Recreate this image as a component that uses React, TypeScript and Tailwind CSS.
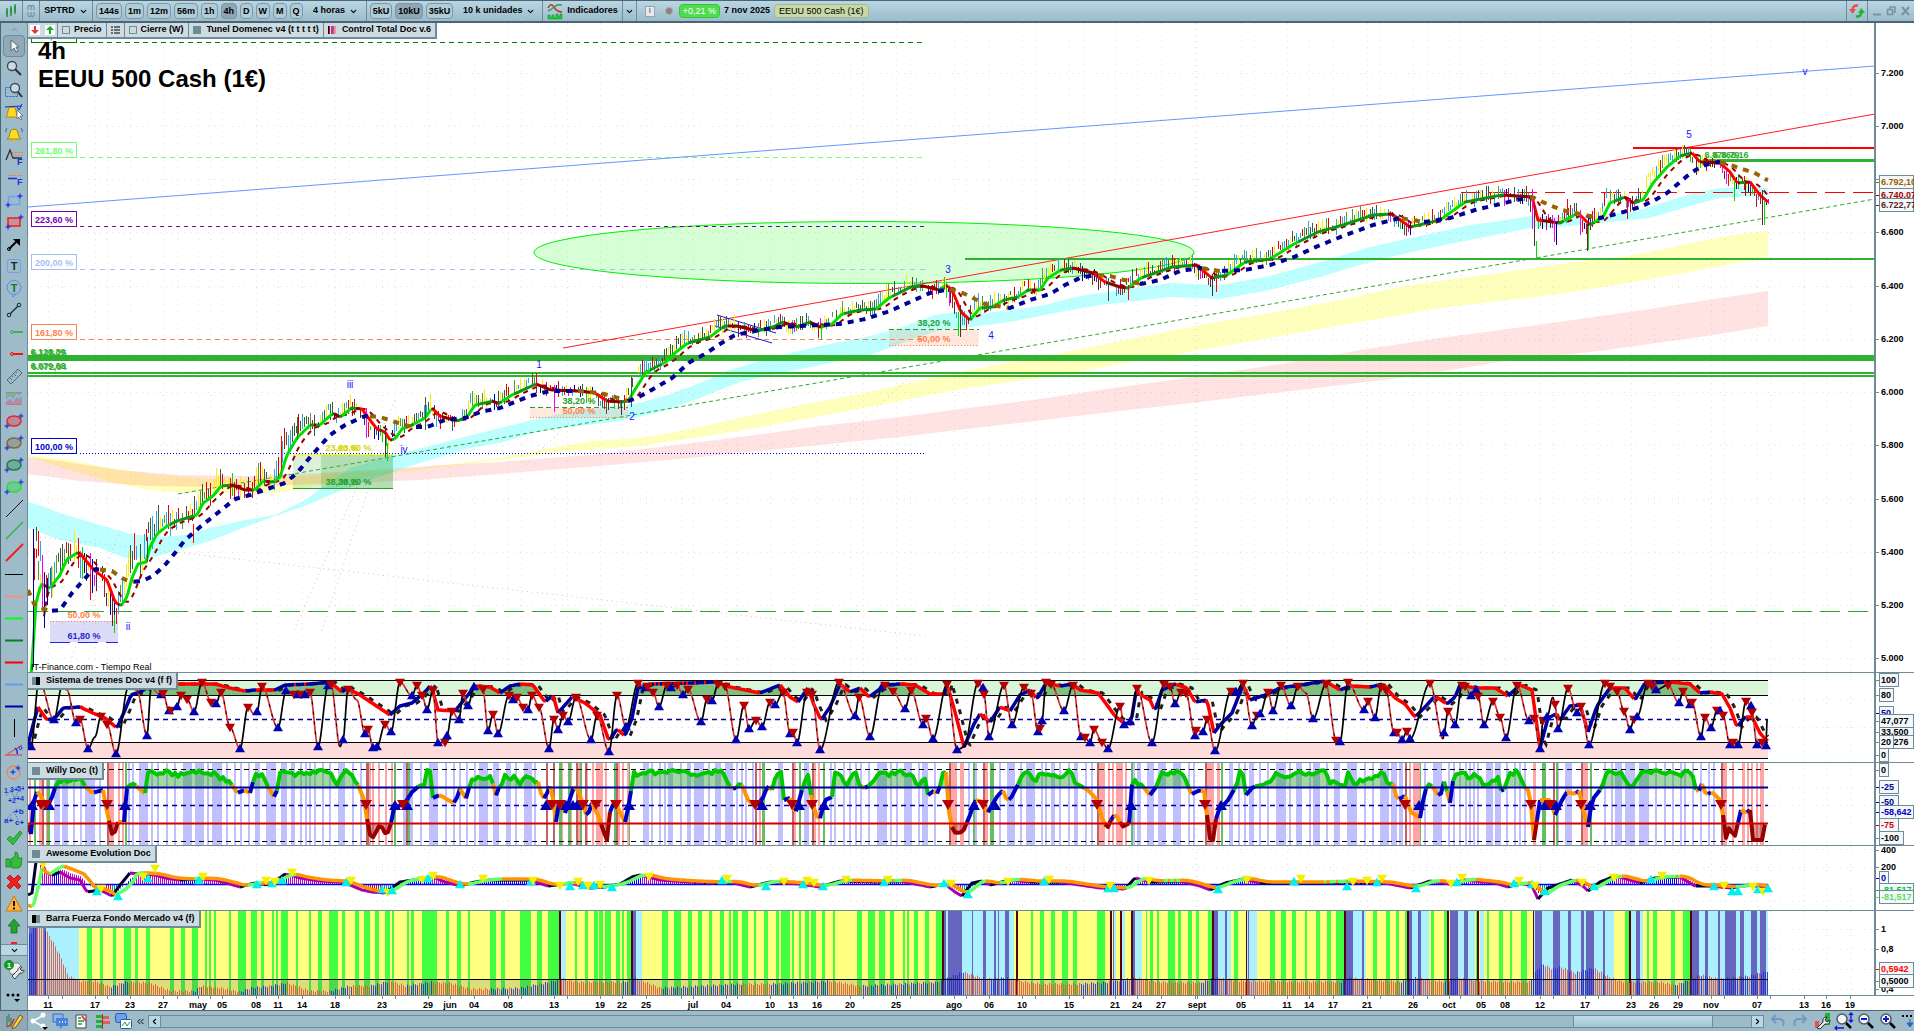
import React from 'react';
import { ChevronDown, ChevronUp, ChevronLeft, ChevronRight, ChevronsLeft } from 'lucide-react';

type Point = [number, number];
type Mark = { kind: string; x: number; y: number };
type Run = { color: string; points: Point[] };

const LEFT = 28;
const RIGHT = 1875;
const LAST_BAR = 1768;

const parse = (text: string): Point[] => text.trim().split(/\s+/).map((p) => p.split(',').map(Number) as Point);

const path = (points: Point[]) => 'M' + points.map((p) => p.join(' ')).join('L');

// linear interpolation over a list of points
const lerp = (points: Point[], ease = (t: number) => t) => (x: number) => {
  if (x <= points[0][0]) return points[0][1];
  for (let i = 1; i < points.length; i++) {
    const [x1, y1] = points[i];
    if (x <= x1) {
      const [x0, y0] = points[i - 1];
      return x1 === x0 ? y1 : y0 + (y1 - y0) * ease((x - x0) / (x1 - x0));
    }
  }
  return points[points.length - 1][1];
};

const average = (f: (x: number) => number, from: number, to: number) => {
  let sum = 0;
  let n = 0;
  for (let x = from; x <= to; x += 1) {
    sum += f(x);
    n += 1;
  }
  return sum / n;
};

const sample = (f: (x: number) => number, from = LEFT, to = LAST_BAR, step = 2): Point[] => {
  const out: Point[] = [];
  for (let x = from; x <= to; x += step) out.push([x, Math.round(f(x) * 10) / 10]);
  return out;
};

// splits a line into runs of one color
const colorRuns = (points: Point[], pick: (a: Point, b: Point) => string): Run[] => {
  const runs: Run[] = [];
  for (let i = 1; i < points.length; i++) {
    const color = pick(points[i - 1], points[i]);
    const last = runs[runs.length - 1];
    if (last && last.color === color) last.points.push(points[i]);
    else runs.push({ color, points: [points[i - 1], points[i]] });
  }
  return runs;
};

const random = (seed: number) => () => {
  seed = (seed * 1664525 + 1013904223) % 4294967296;
  return seed / 4294967296;
};

/* ---------- data ---------- */

const price = parse(`28,690 30,690 32,663 36,603 41,584 50,588 60,575 67,559 79,552 87,562 94,570 107,580 115,602 121,606 127,597
132,578 138,564 146,562 150,547 157,534 167,526 177,521 197,515 203,503 213,496 221,486 232,485 245,490 255,490 263,481 273,482
280,477 287,455 297,438 310,425 320,425 333,413 340,417 352,408 362,409 370,420 377,429 385,432 390,440 395,439 402,429 412,425
425,418 432,408 440,416 457,421 467,417 475,405 493,401 498,404 512,395 536,384 551,390 579,391 595,393 607,401 621,402 628,401
636,388 646,372 666,362 676,352 688,343 710,337 719,330 725,326 737,326 757,331 773,327 783,322 797,327 810,322 820,327 832,324
842,314 860,310 876,309 889,298 911,287 923,286 939,290 947,285 953,292 961,312 970,320 980,308 992,307 1004,300 1018,297
1028,290 1040,290 1048,278 1061,270 1073,268 1093,273 1105,282 1120,287 1128,288 1141,278 1172,267 1196,265 1212,278 1227,275
1245,262 1270,259 1294,244 1318,232 1343,225 1373,215 1392,214 1410,227 1440,220 1465,202 1502,195 1517,196 1532,197 1538,220
1560,223 1578,213 1590,225 1603,217 1610,203 1625,197 1633,203 1643,200 1653,183 1667,167 1680,156 1692,153 1700,162 1720,163
1730,172 1737,183 1750,182 1760,195 1768,202`);

const slow = parse(`28,590 35,606 50,611 60,610 72,593 88,575 95,569 103,570 112,571 122,578 130,582 142,581 153,576 165,565
175,553 185,540 200,527 220,511 235,499 250,495 273,487 285,483 297,473 312,455 330,435 345,425 365,416 380,417 395,422 412,427
427,427 445,420 465,418 480,412 500,408 530,396 550,391 580,391 600,393 612,396 628,401 637,398 655,388 672,378 690,362 705,354
720,344 735,335 760,330 780,327 800,326 820,325 840,324 865,319 890,311 910,302 930,293 950,289 965,294 985,304 1010,308
1030,300 1050,294 1065,285 1080,278 1095,275 1110,276 1120,279 1141,284 1160,280 1180,271 1200,268 1220,271 1245,270 1270,265
1294,257 1318,246 1343,236 1373,225 1400,218 1425,222 1450,218 1475,210 1500,204 1517,200 1532,197 1547,204 1562,210 1580,214
1600,218 1620,213 1640,207 1655,200 1667,193 1680,182 1692,172 1705,165 1718,162 1728,164 1742,169 1755,173 1767,180`);

const bands = [
  {
    name: 'yellow',
    fill: 'rgb(255,255,0)',
    upper: `28,455 70,460 110,468 150,474 185,477 230,480 275,478 330,474 400,470 460,463 500,458 540,450 590,441 640,438 680,431
730,420 790,407 850,396 900,385 960,372 1000,364 1060,353 1120,341 1200,325 1270,313 1340,300 1400,287 1460,278 1500,273
1560,264 1620,257 1660,250 1700,241 1740,234 1768,231`,
    lower: `28,457 60,467 110,482 150,490 190,493 280,493 330,483 400,472 460,465 500,460 560,452 640,446 720,434 800,420 880,405
960,389 1040,378 1120,364 1200,350 1280,336 1360,322 1440,308 1500,301 1560,294 1640,281 1700,270 1740,262 1768,259`,
    opacity: 0.26,
  },
  {
    name: 'pink',
    fill: 'rgb(255,0,0)',
    upper: `28,457 60,461 120,470 180,475 250,476 320,473 400,468 460,464 500,462 600,454 660,447 740,437 820,426 900,417 960,409
1040,399 1120,387 1200,376 1280,364 1360,350 1440,338 1500,330 1580,319 1650,309 1720,298 1768,291`,
    lower: `28,474 80,481 150,486 230,487 320,484 420,480 500,474 600,466 700,457 800,447 900,437 1000,425 1120,411 1200,402
1300,390 1400,378 1500,362 1600,351 1700,337 1768,326`,
    opacity: 0.11,
  },
  {
    name: 'cyan',
    fill: 'rgb(0,255,255)',
    upper: `28,502 42,506 60,513 80,519 100,525 130,534 160,537 185,535 210,528 240,521 275,515 305,500 350,468 390,456 430,446
480,433 500,428 540,418 580,410 622,405 640,403 670,394 700,383 730,370 760,361 790,353 830,344 870,336 900,328 935,315 955,312
985,313 1010,310 1040,306 1080,296 1120,290 1170,283 1220,285 1270,276 1320,262 1370,247 1420,236 1470,225 1500,221 1530,216
1570,217 1600,216 1640,210 1665,202 1690,194 1720,188 1745,186 1768,188`,
    lower: `28,528 60,540 100,548 125,558 150,558 180,550 210,541 240,529 275,516 305,506 330,495 370,480 420,463 470,448 500,443
540,431 580,426 620,421 660,412 700,398 740,382 780,373 830,363 870,355 910,340 940,330 970,327 1010,322 1060,312 1100,305
1120,303 1170,297 1220,299 1270,290 1320,277 1370,262 1420,250 1470,240 1500,234 1530,228 1560,227 1600,223 1650,218 1690,206
1720,198 1768,195`,
    opacity: 0.26,
  },
];

// third field: U = buy arrow, D = sell arrow
const fastText = `31,747,U 39,680 54,720,U 62,686 67,690 76,723,U 80,719,D 88,749,U 95,737 101,716,D 107,724,D 116,754,U 128,688
137,690 147,736,U 151,688 161,695,U 163,693,D 169,711,U 171,710,D 177,707,U 181,695,D 187,699,D 194,712,U 202,682,D 211,702,D
216,704,U 221,692,D 230,727,D 240,749,U 248,707,D 254,714 257,712,U 262,686,D 278,728,U 286,691,U 294,694,D 298,695,U 301,694,D
305,695,U 310,692,D 318,747,U 328,686,U 331,684,D 340,747 343,740,U 348,689,D 357,700 365,734,U 368,729,D 373,748,U 377,747,U
385,724,D 391,732,U 400,682,D 412,696,U 417,685,D 422,695,D 427,710,U 433,690,D 438,743,U 445,742,D 447,736,U 452,711,D
459,720,U 463,693,D 468,706,U 474,687,U 483,689,D 488,731,U 493,714,D 498,734,U 509,695,D 513,700,U 517,697,D 523,707,D
528,710,U 532,695,D 539,707,D 549,749,U 554,719,D 558,730,U 563,715,D 568,722,U 576,697,D 591,740,U 597,715,D 609,752,U
617,695,D 626,727,U 638,683,D 645,688,U 647,686,D 653,692,D 659,707,U 667,685,D 671,688,U 677,685,D 683,695,U 688,689,D
701,722,U 707,699,D 712,701,U 718,684,D 725,686,D 736,740,U 744,705,D 749,729,U 756,720,D 762,727,U 770,702,D 775,705,U
783,692,D 790,734,U 793,732,D 797,743,U 807,692,D 812,694,D 820,750,U 839,682,D 855,716,U 859,697,D 870,737,U 882,687,U
885,685,D 893,691,D 905,709,U 911,690,D 923,725,U 926,718,D 933,739,U 947,684,D 957,750,U 964,747 978,683,D 983,688,U 984,694,D
989,737,U 1004,685,D 1012,725,U 1024,687,D 1031,693,D 1038,732,U 1040,728,D 1042,721,U 1046,682,D 1051,684,D 1064,711,U
1073,685,D 1081,737,U 1085,737,D 1090,743,U 1094,729,D 1102,742,D 1108,749,U 1120,706,D 1124,725,U 1130,722,U 1137,688,D
1152,743,U 1164,684,D 1170,686,D 1175,704,U 1181,692,D 1186,693,D 1195,736,U 1196,730,D 1203,732,U 1207,719,D 1215,751,U
1231,691,D 1236,692,U 1243,683,D 1252,726,U 1257,715,D 1260,714,U 1268,692,D 1273,711,U 1281,685,D 1291,706,U 1298,686,D
1306,693 1313,719,U 1326,684,D 1336,740,D 1340,742,U 1348,682,D 1364,710,U 1368,701,D 1375,718,U 1381,687,D 1386,690,D
1394,733,U 1397,732,D 1402,740,U 1407,731,D 1410,739,U 1430,683,D 1443,739 1444,733,U 1448,711,D 1455,725,U 1462,685,D
1465,686,D 1471,696,U 1476,690,U 1478,696,D 1484,725,U 1493,701,D 1500,717,D 1506,738,U 1517,685,D 1529,721,U 1534,718,D
1540,749,U 1543,720,D 1547,717,U 1553,697 1555,704,D 1558,729,U 1568,688,D 1577,713,U 1581,706,D 1589,745,U 1605,683,D
1610,686,D 1617,691,D 1624,711,D 1630,730,U 1634,719,D 1637,717,U 1648,683,D 1652,686,D 1656,690,U 1668,685,D 1679,703,U
1683,691,D 1690,705,U 1692,702,D 1701,737,U 1705,717,D 1711,728,U 1717,710,D 1720,711,U 1723,715,D 1730,745,U 1733,742,D
1738,745,U 1746,701,D 1751,706,U 1752,712,D 1757,745,U 1762,742,D 1766,746,U 1767,720`;

const fastPoints = fastText.split(/\s+/).map((p) => p.split(','));
const fastAt = lerp(fastPoints.map((p): Point => [Number(p[0]), Number(p[1])]), (t) => t * t * (3 - 2 * t));
const fastMarks: Mark[] = fastPoints.filter((p) => p[2]).map((p) => ({ kind: p[2], x: Number(p[0]), y: Number(p[1]) }));

const train = parse(`28,745 33,725 38,707 47,720 55,718 63,708 80,707 95,714 105,718 117,728 125,710 131,695 140,692 150,686
170,684 200,684 215,684 230,688 245,691 255,690 275,690 285,685 310,684 330,682 342,692 347,688 360,695 375,705 390,715 400,706
412,703 425,692 431,685 438,710 455,711 468,695 475,686 490,687 500,693 510,686 520,684 533,685 545,702 553,695 558,713 572,697
585,703 600,715 609,741 617,729 625,736 632,718 638,688 650,684 690,683 715,682 730,687 745,690 760,693 780,685 790,697 798,702
808,688 814,705 821,720 830,707 840,684 850,692 860,688 869,697 885,685 900,684 915,685 930,694 945,694 947,684 955,712 964,747
974,724 980,714 990,722 1000,707 1010,711 1020,695 1030,690 1037,699 1046,683 1060,686 1073,684 1080,690 1098,693 1107,705
1115,716 1125,724 1131,722 1136,692 1150,700 1155,711 1162,690 1175,684 1187,688 1195,702 1207,700 1214,733 1220,725 1232,713
1243,685 1250,700 1265,695 1280,688 1300,685 1325,681 1340,690 1350,686 1370,687 1383,684 1395,698 1405,704 1415,717 1425,707
1435,696 1447,704 1455,697 1460,685 1475,688 1495,688 1508,696 1520,685 1532,690 1540,748 1548,718 1556,714 1560,720 1570,706
1580,705 1588,732 1597,706 1610,688 1625,688 1635,700 1645,683 1670,682 1690,684 1700,693 1710,692 1722,694 1730,708 1737,727
1745,717 1752,717 1760,733 1767,741`);

const willy = parse(`28,825 31,834 35,790 40,795 46,805 50,803 56,785 62,780 80,780 85,786 92,793 103,790 107,812 113,838 118,822
124,822 127,788 133,782 138,788 145,793 148,775 152,772 160,775 165,770 175,775 190,772 198,770 205,775 213,773 220,777 227,780
232,785 237,793 245,790 250,793 255,775 262,774 267,785 276,800 279,772 290,775 300,774 310,775 320,770 330,772 337,785 345,772
352,773 358,785 363,797 366,805 368,833 374,838 378,826 384,828 386,838 391,823 394,808 405,803 412,792 420,785 424,786 426,772
430,771 433,798 440,795 448,800 455,803 460,789 467,800 470,782 480,778 490,777 492,776 495,798 500,785 505,777 515,778 522,784
525,772 530,780 537,780 543,800 549,790 551,783 556,822 560,795 565,813 570,800 573,787 576,787 582,800 587,818 592,803 598,815
603,830 607,840 610,812 615,800 620,813 625,822 630,800 633,773 636,775 645,772 660,773 675,771 690,774 700,776 712,772 722,771
728,785 735,790 740,780 748,800 755,806 762,800 768,785 772,790 775,778 781,774 784,800 790,798 795,815 802,790 808,775 812,802
819,822 825,800 832,797 835,772 840,775 847,785 855,772 860,787 867,788 872,780 880,773 890,774 900,773 910,773 918,787 925,780
928,795 935,790 939,797 941,775 946,773 949,812 953,832 957,833 963,832 970,815 975,800 983,802 987,814 992,805 998,795
1004,790 1007,802 1013,795 1020,778 1030,772 1035,783 1041,773 1050,775 1065,776 1070,771 1075,783 1083,787 1090,792 1097,800
1103,822 1108,827 1113,815 1118,817 1122,827 1130,823 1132,782 1140,783 1150,795 1156,787 1160,775 1170,773 1180,772 1188,782
1190,795 1200,790 1205,792 1209,838 1213,840 1217,812 1228,800 1235,788 1240,772 1243,775 1246,795 1253,787 1270,783 1278,772
1290,778 1300,772 1310,775 1325,771 1330,782 1345,786 1347,772 1355,783 1370,778 1383,772 1388,785 1393,783 1397,800 1405,796
1411,812 1420,818 1425,790 1430,783 1440,798 1444,780 1450,803 1454,775 1460,771 1468,778 1475,772 1483,785 1490,784 1498,777
1502,795 1510,773 1518,772 1524,787 1530,792 1534,840 1540,800 1550,800 1555,815 1562,800 1567,792 1575,794 1580,790 1583,810
1588,827 1592,800 1600,790 1607,772 1615,775 1622,774 1629,787 1635,785 1640,772 1650,771 1660,773 1668,771 1678,776 1685,772
1693,775 1697,795 1702,784 1706,795 1712,792 1720,800 1723,815 1726,838 1730,825 1734,840 1741,810 1746,813 1750,810 1753,840
1762,840 1767,814`);

const willyUp = [32, 49, 125, 395, 407, 546, 566, 573, 577, 629, 762, 799, 824, 974, 995, 1131, 1221, 1419, 1545, 1556, 1590];
const willyDown = [41, 46, 107, 366, 403, 552, 560, 583, 596, 616, 755, 792, 812, 948, 983, 1097, 1205, 1405, 1531, 1550, 1581, 1721];

const pinkStripes = parse(`29,2 39,3 46,3 107,7 118,2 122,2 366,5 372,2 378,2 385,2 391,2 553,2 561,2 569,3 577,4 586,2 592,2 596,7
605,2 617,3 622,2 627,3 759,2 793,3 814,2 818,2 950,7 960,4 983,5 1098,7 1108,2 1112,2 1116,7 1125,2 1206,8 1217,3 1409,2
1413,3 1416,4 1533,3 1544,2 1582,6 1722,5 1732,2 1742,3 1747,2 1751,2 1756,2 1760,4`);
const redStripes = parse('42,2 107,2 366,3 406,2 546,2 553,2 576,2 585,2 616,2 755,2 792,2 812,2 949,2 983,2 1097,2 1205,2 1405,2 1553,2 1581,2 1721,2');
const greenStripes = parse('34,2 47,3 125,2 394,2 408,2 559,3 568,3 580,2 614,3 629,1 762,3 799,2 823,2 973,2 990,4 1131,2 1221,2 1420,1 1542,4 1556,2 1590,2');

const oscFast = parse(`28,895 32,893 36,862 40,852 45,872 52,875 60,872 70,878 80,880 87,892 100,890 112,896 120,885 130,873
140,874 155,875 165,878 180,880 200,879 215,880 230,884 240,887 255,883 265,885 277,880 285,874 300,878 320,881 340,882 350,885
362,890 372,892 385,893 400,882 420,879 433,877 445,882 460,886 475,882 490,880 510,880 530,880 548,886 570,883 590,888 605,887
620,884 632,877 640,875 660,880 690,882 715,883 730,882 750,887 770,882 800,884 820,887 840,881 880,882 900,881 930,887 945,884
955,892 962,896 972,883 982,881 990,885 1010,880 1030,882 1060,882 1100,888 1125,889 1135,878 1150,882 1180,881 1200,886
1210,890 1225,883 1243,879 1260,883 1290,883 1320,883 1345,882 1385,883 1410,888 1430,881 1450,884 1465,880 1495,883 1508,887
1520,883 1532,886 1538,899 1548,888 1560,884 1572,880 1583,886 1588,891 1600,882 1615,876 1630,880 1640,883 1655,878 1680,877
1695,886 1710,886 1730,888 1750,885 1765,888`);

const oscStart = parse('28,905 33,907 38,888 42,868 46,872 50,874 57,869 63,866 72,869 84,874 96,888 104,889 110,891 116,895 126,889 135,879');

const oscMarksText = `Y43,865 C97,891 Y101,889 C118,896 Y143,877 C148,878 Y155,869 C199,880 Y203,877 C257,884 Y266,881 C272,883
Y275,882 C282,880 Y292,873 C346,882 Y351,881 C382,889 Y388,893 C392,890 Y422,880 C428,878 Y433,876 C460,884 Y483,879 C531,881
Y533,881 Y560,886 C570,886 Y578,882 C583,885 Y588,886 C594,885 Y600,885 C612,887 Y649,877 C722,880 Y727,879 C766,886 Y784,882
C803,884 Y807,881 Y814,883 C823,886 Y846,880 C884,882 Y888,880 C944,883 Y951,884 C968,894 Y1008,882 C1044,881 Y1049,880
C1108,888 Y1110,886 C1114,888 Y1149,881 C1218,889 Y1247,880 C1294,881 Y1301,879 C1347,886 Y1353,882 Y1367,881 C1377,882
Y1382,879 C1416,888 Y1451,884 C1457,882 Y1462,878 C1514,883 Y1519,881 C1532,884 Y1535,886 C1545,891 Y1582,883 C1594,886
Y1614,878 C1651,879 Y1662,876 C1714,886 Y1724,886 C1732,891 C1738,891 Y1753,887 C1758,889 Y1763,892 C1768,888`;
const oscMarks: Mark[] = oscMarksText.split(/\s+/).map((p) => {
  const [x, y] = p.slice(1).split(',').map(Number);
  return { kind: p[0], x, y };
});

const barGreen = parse(`87,5 100,3 113,3 124,7 135,3 146,4 170,4 181,4 192,6 205,2 209,2 214,2 229,2 238,8 251,6 261,3 272,2 276,2
281,7 296,2 309,2 318,4 329,9 342,3 355,4 364,6 375,4 385,5 392,2 407,2 411,3 422,15 446,3 457,4 468,2 490,6 501,4 520,11 537,5
548,11 575,2 585,3 594,4 599,4 605,6 616,4 622,2 627,4 662,6 674,7 688,4 698,4 709,3 720,4 729,2 733,5 742,6 754,2 764,4 776,3
781,9 792,2 799,2 805,4 811,5 822,3 833,2 857,5 868,7 879,6 890,4 903,2 907,2 914,4 925,4 936,6 1031,2 1040,4 1051,4 1062,6
1073,4 1097,8 1146,1 1150,3 1157,2 1168,7 1178,3 1188,4 1196,3 1208,4 1234,4 1270,5 1281,5 1292,4 1305,2 1316,4 1327,4 1336,8
1373,4 1386,4 1396,3 1405,2 1431,3 1444,4 1476,2 1487,2 1499,4 1510,2 1521,6 1625,4 1647,2 1653,4 1671,4 1683,7`);
const barCyan = parse('28,51 561,5 635,7 942,72 1113,3 1122,3 1135,7 1212,19 1247,10 1347,19 1410,19 1450,25 1480,4 1534,80 1631,12 1692,76');
const barBlue = parse(`29,8 44,2 632,4 944,2 948,14 972,1 983,3 994,2 998,1 1005,4 1113,1 1133,2 1214,4 1225,2 1248,1 1346,7 1362,2
1409,3 1418,3 1450,8 1464,4 1535,7 1553,7 1568,3 1581,3 1586,8 1603,2 1636,4 1692,7 1705,3 1718,2 1725,11 1740,4 1751,6 1760,6`);
const barMaroon = parse('559,2 631,2 942,2 1016,2 1110,2 1120,2 1131,2 1212,2 1246,1 1344,2 1407,2 1447,2 1477,2 1533,1 1629,2 1690,2');

const barTop = lerp(
  parse(`28,935 31,932 33,915 46,930 52,940 60,955 68,975 80,980 95,980 110,986 125,981 150,982 170,990 195,990 200,985 220,987
240,991 250,987 270,985 287,982 310,990 330,990 350,985 370,985 390,980 405,985 430,981 450,982 470,988 490,988 520,987 550,981
560,978 580,981 625,981 634,977 650,983 660,987 700,985 740,983 770,983 830,980 860,985 900,983 940,981 950,976 963,971 975,975
985,978 1005,977 1020,980 1040,983 1080,983 1110,981 1135,977 1160,981 1200,982 1215,977 1240,980 1340,981 1350,977 1400,981
1415,977 1445,981 1455,977 1480,980 1530,981 1536,970 1542,963 1552,968 1560,966 1575,972 1593,967 1610,977 1625,981 1660,981
1675,984 1690,979 1700,974 1720,978 1750,975 1767,970`)
);

const dateLabels: [number, string][] = [
  [48, '11'], [95, '17'], [130, '23'], [163, '27'], [198, 'may'], [222, '05'], [256, '08'], [278, '11'], [302, '14'],
  [335, '18'], [382, '23'], [428, '29'], [450, 'jun'], [474, '04'], [508, '08'], [554, '13'], [600, '19'], [622, '22'],
  [646, '25'], [693, 'jul'], [726, '04'], [770, '10'], [793, '13'], [817, '16'], [850, '20'], [896, '25'], [954, 'ago'],
  [989, '06'], [1022, '10'], [1069, '15'], [1115, '21'], [1137, '24'], [1161, '27'], [1197, 'sept'], [1241, '05'],
  [1287, '11'], [1309, '14'], [1333, '17'], [1367, '21'], [1413, '26'], [1449, 'oct'], [1481, '05'], [1505, '08'],
  [1540, '12'], [1585, '17'], [1631, '23'], [1654, '26'], [1678, '29'], [1711, 'nov'], [1757, '07'], [1804, '13'],
  [1826, '16'], [1850, '19'],
];
const minorTicks = [62, 107, 177, 210, 349, 395, 521, 567, 681, 737, 863, 910, 966, 1035, 1083, 1195, 1254, 1380, 1427, 1460, 1553, 1598, 1724, 1770];
const gridX = [...dateLabels.map((d) => d[0]), ...minorTicks];

/* ---------- chart parts ---------- */

const Grid = ({ top, bottom, rows }: { top: number; bottom: number; rows: number[] }) => (
  <g stroke="#e2e2e2" strokeDasharray="1 5">
    {gridX.map((x) => (
      <line key={x} x1={x + 0.5} x2={x + 0.5} y1={top} y2={bottom} />
    ))}
    {rows.map((y) => (
      <line key={y} x1={LEFT} x2={RIGHT} y1={y + 0.5} y2={y + 0.5} />
    ))}
  </g>
);

const Runs = ({ runs, width, dash }: { runs: Run[]; width: number; dash?: string }) => (
  <g fill="none" strokeWidth={width} strokeDasharray={dash} strokeLinejoin="round">
    {runs.map((run, i) => (
      <path key={i} d={path(run.points)} stroke={run.color} />
    ))}
  </g>
);

const Arrow = ({ x, y, up, size, color }: { x: number; y: number; up: boolean; size: number; color: string }) => {
  const h = size * 0.85;
  const d = up
    ? `M${x - size} ${y + h}L${x + size} ${y + h}L${x} ${y - h}Z`
    : `M${x - size} ${y - h}L${x + size} ${y - h}L${x} ${y + h}Z`;
  return <path d={d} fill={color} />;
};

const priceAt = lerp(price);
const slowAt = lerp(slow);
const trainAt = lerp(train);
const oscFastAt = lerp(oscFast);
const oscStartAt = lerp(oscStart);
const oscSignalAt = (x: number) => (x < 135 ? oscStartAt(x) : average(oscFastAt, x - 14, x) - 1);

const maColor = (a: Point, b: Point) => {
  const slope = priceAt(a[0] - 3) - priceAt(b[0] + 3);
  if (slope > 4) return '#00e000';
  if (slope > 0) return '#0a9614';
  return slope < -4 ? '#ff0000' : '#900000';
};

const makeCandles = () => {
  const rnd = random(41);
  const out: { x: number; y1: number; y2: number; color: string }[] = [];
  const rising = ['#ffee00', '#e00000', '#2aa8dc', '#3c5a3c', '#ffee00', '#2aa8dc', '#50a030', '#3c5a3c'];
  const falling = ['#ff0000', '#ffee00', '#5a2830', '#2aa8dc', '#ff00ff', '#3c5a3c', '#b01830', '#00e000', '#0000a0'];
  for (let x = 34; x <= LAST_BAR; x += 2) {
    if (rnd() < 0.12) continue;
    const slope = priceAt(x - 4) - priceAt(x + 4);
    const vol = x < 160 ? 2.2 : x < 320 ? 1.5 : 1;
    const mid = priceAt(x + 4) - slope * 0.4 - 1 + (rnd() - 0.5) * 7 * vol;
    const half = (2 + rnd() * 6) * vol;
    const colors = slope >= 0 ? rising : falling;
    out.push({ x, y1: Math.round(mid - half), y2: Math.round(mid + half), color: colors[Math.floor(rnd() * colors.length)] });
  }
  return out;
};

const spikes: [number, number, number, string][] = [
  [33, 529, 667, '#000090'], [36, 527, 541, '#3c5a3c'], [38, 531, 556, '#ff0000'], [40, 541, 561, '#2aa8dc'],
  [42, 555, 607, '#ff00ff'], [44, 573, 628, '#000090'], [47, 578, 605, '#000090'], [51, 566, 598, '#2aa8dc'],
  [90, 574, 600, '#ff0000'], [112, 600, 626, '#5a2830'], [114, 615, 633, '#00e000'], [134, 533, 560, '#ff0000'],
  [147, 537, 562, '#3c5a3c'], [193, 524, 543, '#ff0000'], [281, 436, 470, '#ff0000'], [297, 417, 440, '#3c5a3c'],
  [366, 408, 438, '#ff00ff'], [385, 425, 457, '#5a2830'], [387, 443, 461, '#00e000'], [425, 397, 430, '#3c5a3c'],
  [430, 394, 410, '#ffee00'], [536, 373, 390, '#ff0000'], [554, 385, 412, '#ff00ff'], [606, 398, 414, '#3c5a3c'],
  [621, 400, 415, '#5a2830'], [631, 377, 407, '#3c5a3c'], [720, 316, 330, '#3c5a3c'], [821, 325, 340, '#00e000'],
  [945, 276, 290, '#ffee00'], [949, 290, 306, '#ff00ff'], [958, 312, 336, '#00e000'], [960, 305, 337, '#5a2830'],
  [1108, 278, 301, '#3c5a3c'], [1128, 285, 300, '#ff0000'], [1212, 275, 296, '#5a2830'], [1216, 278, 292, '#ff0000'],
  [1532, 189, 229, '#ff00ff'], [1534, 205, 246, '#5a2830'], [1536, 241, 258, '#00e000'], [1554, 218, 242, '#ff00ff'],
  [1556, 222, 245, '#000090'], [1567, 199, 215, '#ff0000'], [1580, 210, 235, '#ff00ff'], [1587, 224, 251, '#5a2830'],
  [1588, 226, 250, '#00e000'], [1627, 200, 219, '#ff0000'], [1696, 160, 175, '#5a2830'], [1734, 180, 201, '#00e000'],
  [1745, 180, 196, '#5a2830'], [1762, 190, 225, '#5a2830'], [1764, 200, 225, '#00e000'],
];

const fibLevels = [
  { y: 42, label: '323,60 %', color: '#008000', dash: '5 4' },
  { y: 157, label: '261,80 %', color: '#70ff70', dash: '5 4' },
  { y: 226, label: '223,60 %', color: '#7800b4', dash: '4 4' },
  { y: 269, label: '200,00 %', color: '#a5bff5', dash: '5 5' },
  { y: 339, label: '161,80 %', color: '#ff8048', dash: '5 4' },
  { y: 453, label: '100,00 %', color: '#0000d0', dash: '1 2' },
];

const waves: [number, number, string][] = [
  [350, 388, 'iii'], [404, 453, 'iv'], [128, 630, 'ii'], [539, 368, '1'], [632, 420, '2'],
  [948, 273, '3'], [991, 339, '4'], [1689, 138, '5'], [1805, 75, 'v'],
];

const smallLabels: [number, number, string, string][] = [
  [84, 618, '50,00 %', '#ff8048'], [84, 639, '61,80 %', '#2828d8'],
  [342, 451, '23,60 %', '#d8d800'], [355, 451, '23,60 %', '#d8d800'],
  [342, 485, '38,20 %', '#28a028'], [355, 485, '38,20 %', '#28a028'],
  [579, 404, '38,20 %', '#28a028'], [579, 414, '50,00 %', '#ff8048'],
  [934, 326, '38,20 %', '#28a028'], [934, 342, '50,00 %', '#ff8048'],
  [1722, 158, '6.876,79', '#30b030'], [1731, 158, '6.868,16', '#30b030'],
  [48, 355, '6.128,89', '#30b030'], [49, 356, '6.128,25', '#30b030'],
  [48, 369, '6.079,68', '#30b030'], [49, 370, '6.072,04', '#30b030'],
];

const PriceChart = () => {
  const candles = makeCandles();
  const lagged = sample((x) => average(priceAt, x - 14, x), 44);
  return (
    <svg className="block h-full w-full" viewBox="28 23 1847 649" preserveAspectRatio="xMinYMin slice" role="img" aria-label="EEUU 500 Cash">
      <Grid top={23} bottom={672} rows={[73, 126, 179, 232, 286, 339, 392, 445, 499, 552, 605, 658]} />

      <ellipse cx="864" cy="252.5" rx="330" ry="31" fill="#00ff00" fillOpacity=".16" stroke="#00f000" />

      {bands.map((b) => (
        <path
          key={b.name}
          d={path([...parse(b.upper), ...parse(b.lower).reverse()]) + 'Z'}
          fill={b.fill}
          fillOpacity={b.opacity}
        />
      ))}

      <g stroke="#c8c8c8" strokeDasharray="1 4">
        <line x1="40" y1="537" x2="925" y2="636" />
        <line x1="395" y1="400" x2="293" y2="633" />
        <line x1="372" y1="478" x2="321" y2="633" />
        <line x1="120" y1="530" x2="70" y2="662" />
        <line x1="925" y1="362" x2="820" y2="462" />
        <line x1="620" y1="375" x2="525" y2="465" />
      </g>

      {fibLevels.map((f) => (
        <g key={f.label}>
          <line x1="80" x2="925" y1={f.y + 0.5} y2={f.y + 0.5} stroke={f.color} strokeDasharray={f.dash} />
          <rect x="31.5" y={f.y - 14.5} width="45" height="15" fill="#fff" stroke={f.color} />
          <text x="35" y={f.y - 3} fill={f.color} fontSize="9" fontWeight="700">
            {f.label}
          </text>
        </g>
      ))}

      <rect x="50" y="621" width="68" height="21" fill="#3c3cdc" fillOpacity=".18" />
      <line x1="50" x2="118" y1="621.5" y2="621.5" stroke="#ff8048" strokeDasharray="1 2" />
      <line x1="50" x2="118" y1="642.5" y2="642.5" stroke="#2828d8" strokeDasharray="20 8" />
      <rect x="293" y="454" width="100" height="34" fill="#28a028" fillOpacity=".16" />
      <rect x="321" y="454" width="72" height="34" fill="#28a028" fillOpacity=".22" />
      <line x1="293" x2="393" y1="454.5" y2="454.5" stroke="#ffff00" />
      <line x1="293" x2="393" y1="488.5" y2="488.5" stroke="#28a028" />
      <rect x="530" y="408" width="98" height="10" fill="#ff8048" fillOpacity=".18" />
      <line x1="530" x2="628" y1="407.5" y2="407.5" stroke="#28a028" strokeDasharray="5 3" />
      <line x1="530" x2="628" y1="417.5" y2="417.5" stroke="#ff8048" strokeDasharray="1 2" />
      <rect x="889" y="330" width="90" height="16" fill="#ff8048" fillOpacity=".18" />
      <line x1="889" x2="979" y1="329.5" y2="329.5" stroke="#28a028" strokeDasharray="5 3" />
      <line x1="889" x2="979" y1="345.5" y2="345.5" stroke="#ff8048" strokeDasharray="1 2" />

      <line x1="28" y1="207" x2="1875" y2="66" stroke="#6496ff" />
      <line x1="563" y1="348" x2="1875" y2="114" stroke="#ff1e1e" />
      <line x1="178" y1="494" x2="1875" y2="199" stroke="#30a830" strokeDasharray="4 3" />
      <line x1="28" x2="1875" y1="611.5" y2="611.5" stroke="#28a828" strokeDasharray="20 8" />
      <line x1="1461" x2="1875" y1="192.5" y2="192.5" stroke="#ff0000" strokeDasharray="20 8" />
      <line x1="1633" x2="1875" y1="148" y2="148" stroke="#ff0000" strokeWidth="2" />
      <line x1="717" y1="315" x2="776" y2="333" stroke="#1414e6" />
      <line x1="715" y1="326" x2="772" y2="343" stroke="#1414e6" />
      <g stroke="#30b230">
        <line x1="28" x2="1875" y1="358" y2="358" strokeWidth="6" />
        <line x1="28" x2="1875" y1="373" y2="373" strokeWidth="2" />
        <line x1="28" x2="1875" y1="376" y2="376" strokeWidth="2" />
        <line x1="965" x2="1875" y1="259" y2="259" strokeWidth="2" />
        <line x1="1703" x2="1875" y1="160.5" y2="160.5" strokeWidth="3" />
      </g>

      {candles.map((c) => (
        <line key={c.x} x1={c.x + 0.5} x2={c.x + 0.5} y1={c.y1} y2={c.y2} stroke={c.color} />
      ))}
      <Runs runs={colorRuns(lagged, () => '#960000')} width={2} dash="5 5" />
      <Runs runs={colorRuns(sample(priceAt, 30), maColor)} width={3} />
      {spikes.map(([x, y1, y2, color]) => (
        <line key={x} x1={x + 0.5} x2={x + 0.5} y1={y1} y2={y2} stroke={color} />
      ))}
      <Runs
        runs={colorRuns(sample(slowAt), (a, b) => (slowAt(b[0] + 4) > slowAt(a[0] - 4) + 0.3 ? '#966400' : '#000096'))}
        width={4}
        dash="6 6"
      />

      {smallLabels.map(([x, y, text, color], i) => (
        <text key={i} x={x} y={y} fill={color} fontSize="9" fontWeight="700" textAnchor="middle">
          {text}
        </text>
      ))}
      {waves.map(([x, y, text]) => (
        <text key={text} x={x} y={y} fill="#1414ff" fontSize="10" textAnchor="middle">
          {text}
        </text>
      ))}
      <text x="38" y="59" fontSize="24" fontWeight="700">4h</text>
      <text x="38" y="87" fontSize="24" fontWeight="700">EEUU 500 Cash (1€)</text>
      <text x="31" y="670" fontSize="9">IT-Finance.com - Tiempo Real</text>
    </svg>
  );
};

const TrainsChart = () => {
  const fast = sample(fastAt, 29, 1767, 1);
  return (
    <svg className="block h-full w-full" viewBox="28 673 1847 89" preserveAspectRatio="xMinYMin slice" role="img" aria-label="Sistema de trenes">
      <defs>
        <clipPath id="overbought">
          <rect x="28" y="680" width="1741" height="15" />
        </clipPath>
      </defs>
      <Grid top={673} bottom={762} rows={[699, 727]} />
      <rect x="28" y="680" width="1740" height="15" fill="#d8f5d8" />
      <rect x="28" y="742" width="1740" height="16" fill="#ffdcdc" />
      <path d={path([...train, [1767, 695], [28, 695]])} fill="#7dc07d" clipPath="url(#overbought)" />
      <g stroke="#000">
        {[680, 695, 742, 758].map((y) => (
          <line key={y} x1="28" x2="1768" y1={y + 0.5} y2={y + 0.5} />
        ))}
      </g>
      <line x1="28" x2="1768" y1="719.5" y2="719.5" stroke="#000096" strokeDasharray="5 4" strokeWidth="1.5" />
      <path d={path(sample((x) => trainAt(x - 5)))} fill="none" stroke="#202020" strokeWidth="3" strokeDasharray="5 6" />
      <Runs runs={colorRuns(sample(trainAt), (a, b) => (b[1] < a[1] ? '#0000a0' : '#ff0000'))} width={3.5} />
      <Runs runs={colorRuns(fast, (a, b) => (b[1] < a[1] ? '#000000' : '#d83232'))} width={1.7} />
      <Runs runs={colorRuns(fast, (a, b) => (b[1] < a[1] ? 'none' : '#000000'))} width={1} dash="3 7" />
      {fastMarks.map((m) => (
        <Arrow key={m.x} x={m.x} y={m.kind === 'U' ? m.y - 1 : m.y + 1} up={m.kind === 'U'} size={5} color={m.kind === 'U' ? '#0000b4' : '#b40000'} />
      ))}
    </svg>
  );
};

const makeLavender = () => {
  const rnd = random(12);
  const out: Point[] = [];
  let x = 54;
  while (x < 1725) {
    const w = rnd() < 0.3 ? 4 + Math.floor(rnd() * 7) : 2;
    const busy = pinkStripes.some(([px, pw]) => x < px + pw + 4 && x + w > px - 4);
    if (!busy) out.push([x, w]);
    x += w + 2 + Math.floor(rnd() * 6);
  }
  return out;
};

const Stripes = ({ list, top, bottom, color }: { list: Point[]; top: number; bottom: number; color: string }) => (
  <g fill={color}>
    {list.map(([x, w], i) => (
      <rect key={i} x={x} y={top} width={w} height={bottom - top} />
    ))}
  </g>
);

const wiggly = (() => {
  const rnd = random(5);
  const at = lerp(willy);
  return sample(at, 28, 1767, 3).map(([x, y]): Point => [x, y < 784 ? Math.max(770, y + (rnd() - 0.5) * 5) : y]);
})();

const willyColor = (a: Point, b: Point) => {
  const y = (a[1] + b[1]) / 2;
  if (y < 787) return '#00c800';
  if (y > 823) return '#960000';
  return b[1] < a[1] - 0.4 ? '#0000c8' : '#ff9600';
};

const WillyChart = () => (
  <svg className="block h-full w-full" viewBox="28 763 1847 82" preserveAspectRatio="xMinYMin slice" role="img" aria-label="Willy Doc">
    <defs>
      <clipPath id="aboveHigh">
        <rect x="28" y="763" width="1741" height="24" />
      </clipPath>
      <clipPath id="belowLow">
        <rect x="28" y="823" width="1741" height="22" />
      </clipPath>
    </defs>
    <Grid top={763} bottom={845} rows={[787, 805]} />
    <Stripes list={makeLavender()} top={763} bottom={845} color="#c0c0ff" />
    <Stripes list={pinkStripes} top={763} bottom={845} color="#ffa5a5" />
    <Stripes list={greenStripes} top={763} bottom={845} color="#64be64" />
    <Stripes list={redStripes} top={763} bottom={845} color="#be6464" />
    <path d={path([...wiggly, [1767, 787], [28, 787]])} fill="#28a028" fillOpacity=".42" clipPath="url(#aboveHigh)" />
    <path d={path([...wiggly, [1767, 823], [28, 823]])} fill="#960000" fillOpacity=".4" clipPath="url(#belowLow)" />
    <g stroke="#000" strokeDasharray="5 4">
      <line x1="28" x2="1768" y1="769.5" y2="769.5" />
      <line x1="28" x2="1768" y1="841.5" y2="841.5" />
    </g>
    <Runs runs={colorRuns(wiggly, willyColor)} width={4} />
    <line x1="28" x2="1768" y1="787.5" y2="787.5" stroke="#000096" strokeWidth="2" />
    <line x1="28" x2="1768" y1="805.5" y2="805.5" stroke="#000096" strokeWidth="1.5" strokeDasharray="5 4" />
    <line x1="28" x2="1768" y1="823.5" y2="823.5" stroke="#d20000" strokeWidth="2" />
    {willyUp.map((x) => (
      <Arrow key={x} x={x} y={805} up size={6} color="#0000b4" />
    ))}
    {willyDown.map((x) => (
      <Arrow key={x} x={x} y={805} up={false} size={6} color="#b40000" />
    ))}
  </svg>
);

const AwesomeChart = () => (
  <svg className="block h-full w-full" viewBox="28 846 1847 64" preserveAspectRatio="xMinYMin slice" role="img" aria-label="Awesome Evolution">
    <Grid top={846} bottom={910} rows={[849, 867, 901]} />
    {sample(oscFastAt, 40, LAST_BAR, 2).map(([x, y]) => {
      const y2 = (y + oscSignalAt(x)) / 2;
      if (Math.abs(y2 - 884.5) < 1) return null;
      const down = oscFastAt(x + 3) > oscFastAt(x - 3);
      const color = y2 > 884.5 ? (down ? '#ff0000' : '#00a0a0') : down ? '#c800c8' : '#0000ff';
      return <line key={x} x1={x + 0.5} x2={x + 0.5} y1="884.5" y2={y2} stroke={color} />;
    })}
    <line x1="28" x2="1768" y1="884.5" y2="884.5" stroke="#0000ff" strokeWidth="1.5" />
    <Runs runs={colorRuns(sample(oscFastAt), (a, b) => (b[1] > a[1] ? '#aa00aa' : '#000032'))} width={3} />
    <Runs runs={colorRuns(sample(oscSignalAt), (a, b) => (b[1] < a[1] ? '#64ff64' : '#ff9600'))} width={3.5} />
    {oscMarks.map((m, i) => (
      <Arrow key={i} x={m.x} y={m.y} up={m.kind === 'C'} size={5} color={m.kind === 'C' ? '#00f0f0' : '#f5f000'} />
    ))}
  </svg>
);

const ForceChart = () => (
  <svg className="block h-full w-full" viewBox="28 911 1847 84" preserveAspectRatio="xMinYMin slice" role="img" aria-label="Barra Fuerza Fondo Mercado">
    <Grid top={911} bottom={995} rows={[929, 949, 969, 989]} />
    <rect x="28" y="911" width="1740" height="84" fill="#ffff80" />
    <Stripes list={barGreen} top={911} bottom={995} color="#40ff40" />
    <Stripes list={barCyan} top={911} bottom={995} color="#aaf0ff" />
    <Stripes list={barBlue} top={911} bottom={995} color="#6666c0" />
    <Stripes list={barMaroon} top={911} bottom={995} color="#5a0010" />
    <rect x="28" y="980" width="1740" height="15" fill="#646464" fillOpacity=".22" />
    {sample(barTop, 29, 1767, 2).map(([x, y], i) => {
      const jitter = (i * 7) % 3;
      const blue = (x > 28 && x < 36) || (barTop(x + 3) < barTop(x - 3) && i % 5 !== 0) || barBlue.some(([bx, bw]) => x >= bx && x < bx + bw);
      return <line key={x} x1={x + 0.5} x2={x + 0.5} y1={y + jitter} y2="995" stroke={blue ? '#2828d2' : '#f04b32'} strokeOpacity=".85" />;
    })}
    <line x1="28" x2="1768" y1="979.5" y2="979.5" stroke="#000" />
  </svg>
);

/* ---------- axes ---------- */

type Tag = { y: number; text: string; color?: string; boxed?: boolean };

const Axis = ({ top, height, tags }: { top: number; height: number; tags: Tag[] }) => (
  <div className="w-10 shrink-0 border-l-2 border-[#6f8b96] bg-white">
    <svg className="block h-full w-full" viewBox={`1876 ${top} 38 ${height}`} preserveAspectRatio="xMinYMin slice">
      {tags.map((t, i) => (
        <g key={i}>
          <line x1="1876" x2="1879" y1={t.y + 0.5} y2={t.y + 0.5} stroke={t.color ?? '#6f8b96'} />
          {t.boxed && <rect x="1879.5" y={t.y - 6.5} width={Math.min(34, t.text.length * 5 + 4)} height="13" fill="#f5f8fa" stroke="#6f8b96" />}
          <text x="1881" y={t.y + 3} fontSize="9" fontWeight="700" fill={t.color ?? '#000'}>
            {t.text}
          </text>
        </g>
      ))}
    </svg>
  </div>
);

const priceTags: Tag[] = [
  ...['7.200', '7.000', '6.800', '6.600', '6.400', '6.200', '6.000', '5.800', '5.600', '5.400', '5.200', '5.000']
    .map((text, i) => ({ text, y: [73, 126, 179, 232, 286, 339, 392, 445, 499, 552, 605, 658][i] })),
  { y: 195, text: '6.740,07', color: '#a00000', boxed: true },
  { y: 182, text: '6.792,10', color: '#966400', boxed: true },
  { y: 205, text: '6.722,77', color: '#5a1e1e', boxed: true },
];

/* ---------- toolbar ---------- */

const TimeButton = ({ label, active }: { label: string; active?: boolean }) => (
  <button
    type="button"
    aria-pressed={!!active}
    className={`h-4 rounded-sm border border-[#7c97a4] px-0.5 leading-none ${active ? 'bg-[#8fa6b4]' : 'bg-[#b0ccd9]'}`}
  >
    {label}
  </button>
);

const Separator = () => <span className="h-full w-px shrink-0 bg-[#6f8b96]" />;

const MenuButton = ({ label }: { label: string }) => (
  <button type="button" className="flex items-center gap-1">
    {label}
    <ChevronDown size={9} strokeWidth={3} />
  </button>
);

const TopBar = () => (
  <header className="flex h-[23px] shrink-0 items-center border-t border-b-2 border-[#4b6574] bg-linear-to-b from-[#b9d6e3] to-[#9cbccb] font-bold">
    <button type="button" aria-label="Tipo de gráfico" className="flex h-full w-[22px] shrink-0 items-center justify-center">
      <svg width="14" height="16" viewBox="0 0 14 16">
        <path d="M3 5v9M7 3v10M11 1v10" stroke="#1e5a28" />
        <path d="M2 7h2v5H2zM6 5h2v5H6zM10 3h2v6h-2z" fill="#28963c" />
      </svg>
    </button>
    <Separator />
    <button type="button" aria-label="Vincular" className="flex h-full w-4 items-center justify-center">
      <svg width="8" height="14" viewBox="0 0 8 14" fill="none" stroke="#7d929d" strokeWidth="1.3">
        <path d="M1 6V3a1 1 0 0 1 3 0v3M4 3a1 1 0 0 1 3 0v3M1 8v3a1 1 0 0 0 3 0V8M4 11a1 1 0 0 0 3 0V8" />
      </svg>
    </button>
    <Separator />
    <div className="flex w-[52px] justify-center">
      <MenuButton label="SPTRD" />
    </div>
    <Separator />
    <nav className="flex gap-[3px] px-[3px]">
      {['144s', '1m', '12m', '56m', '1h', '4h', 'D', 'W', 'M', 'Q'].map((t) => (
        <TimeButton key={t} label={t} active={t === '4h'} />
      ))}
    </nav>
    <div className="flex w-[60px] shrink-0 justify-center">
      <MenuButton label="4 horas" />
    </div>
    <Separator />
    <nav className="flex gap-[3px] px-[3px]">
      {['5kU', '10kU', '35kU'].map((t) => (
        <TimeButton key={t} label={t} active={t === '10kU'} />
      ))}
    </nav>
    <div className="flex w-[86px] shrink-0 justify-center">
      <MenuButton label="10 k unidades" />
    </div>
    <Separator />
    <button type="button" className="flex h-full shrink-0 items-center gap-1 px-1">
      <svg width="16" height="18" viewBox="0 0 16 18" fill="none">
        <path d="M1 6q3-6 6-1t8 5" stroke="#c83232" strokeWidth="1.5" />
        <path d="M1 9q3-1 6-4t8-2" stroke="#32a050" strokeWidth="1.5" />
        <path d="M1 17v-4h2v2h2v-2h2v3h2v-4h2v2h2v-2h2v5z" fill="#00dc1e" stroke="#28783c" strokeWidth=".5" />
      </svg>
      Indicadores
    </button>
    <Separator />
    <button type="button" aria-label="Más indicadores" className="flex h-full w-[13px] items-center justify-center">
      <ChevronDown size={9} strokeWidth={3} />
    </button>
    <Separator />
    <button type="button" aria-label="Información" className="ml-2 flex h-[11px] w-2.5 items-center justify-center border border-[#98a5ac] bg-[#e6eaec] text-[#808a90]">
      i
    </button>
    <span className="ml-2.5 h-2 w-2 rounded-full border border-[#b8a8a8] bg-[#8c8080]" />
    <span className="ml-1.5 rounded-sm border border-[#32c83c] bg-[#50dc50] px-[3px] leading-3 font-normal text-white">+0,21 %</span>
    <span className="ml-1">7 nov 2025</span>
    <span className="ml-1 rounded border border-[#a9b888] bg-[#c8d8a8] px-1 leading-3 font-normal">EEUU 500 Cash (1€)</span>
    <div className="ml-auto flex h-full items-center">
      <Separator />
      <button type="button" aria-label="Actualizar" className="flex w-5 justify-center">
        <svg width="16" height="16" viewBox="0 0 16 16" fill="none" strokeWidth="2.5">
          <path d="M9 2.500Q3.500 2 3.500 7" stroke="#f04b50" />
          <path d="M0 6h7L3.500 11z" fill="#f04b50" />
          <path d="M7 13.500q5.500 .5 5.500-5" stroke="#1eb432" />
          <path d="M9 10h7l-3.500-5z" fill="#1eb432" />
        </svg>
      </button>
      <Separator />
      <div className="flex items-center px-1">
        <svg width="38" height="10" viewBox="0 0 38 10" fill="none" stroke="#7a929e" strokeWidth="1.5">
          <path d="M1 8.500h8" strokeWidth="2" />
          <path d="M18 3V1h5v5h-2M15.500 3.500h5v5h-5z" />
          <path d="M30 1l7 8M37 1l-7 8" strokeWidth="2" />
        </svg>
      </div>
    </div>
  </header>
);

/* ---------- drawing tools ---------- */

const plus = (x: number, y: number) => `M${x - 2.5} ${y}h5M${x} ${y - 2.5}v5`;

const Oval = ({ color }: { color: string }) => (
  <>
    <ellipse cx="10" cy="11" rx="7" ry="5" fill={color} fillOpacity=".3" stroke={color} strokeWidth="1.5" />
    <path d={plus(3, 16) + plus(17, 6)} stroke="#1414e6" />
  </>
);

const HLine = ({ color, width = 2 }: { color: string; width?: number }) => <path d="M1 10.500h18" stroke={color} strokeWidth={width} />;

const Diagonal = ({ color, width }: { color: string; width: number }) => <path d="M2 19L19 2" stroke={color} strokeWidth={width} />;

const Ray = ({ color }: { color: string }) => (
  <>
    <path d="M9 10h10" stroke={color} strokeWidth="1.8" />
    <circle cx="8" cy="10" r="1.500" stroke={color} />
  </>
);

const tools: { label: string; icon: React.ReactNode }[] = [
  { label: 'Cursor', icon: <path d="M7 4v11l3-3 2 4 2-1-2-4h3z" fill="#f0f4f6" stroke="#5a6e78" /> },
  { label: 'Zoom', icon: <><circle cx="8" cy="8" r="4.500" stroke="#3c4650" fill="#c8dce6" strokeWidth="1.3" /><path d="M11 11l6 6" stroke="#28323c" strokeWidth="2" /></> },
  { label: 'Zoom de zona', icon: <><path d="M1.500 7.500h12v9h-12z" stroke="#1e64dc" strokeDasharray="2 1" /><circle cx="11" cy="8" r="4.500" stroke="#3c4650" fill="#c8dce6" strokeWidth="1.300" /><path d="M14 12l4 5" stroke="#28323c" strokeWidth="2" /></> },
  { label: 'Editar alerta', icon: <><path d="M2 15q2-2 2-6a4 4 0 0 1 8 0q0 4 2 6z" fill="#ffdc1e" stroke="#b48c14" /><path d="M1 5l17-1M13 5l2 3 3-6" stroke="#1e28c8" /><path d="M13 8v9l2-2 2 3 1-1-2-3h3z" fill="#fff" stroke="#505a64" strokeWidth=".7" /></> },
  { label: 'Alerta', icon: <><path d="M3 15q3-2 3-6a4 4 0 0 1 8 0q0 4 3 6z" fill="#ffdc1e" stroke="#a08214" /><circle cx="10" cy="16.500" r="1.500" fill="#f0b414" /><path d="M3 4q-2 2-1 4M17 4q2 2 1 4" stroke="#505a64" /></> },
  { label: 'Fibonacci', icon: <><path d="M2 14L6 4l3 8h9" stroke="#28323c" strokeWidth="1.300" /><path d="M8 6.500h11M8 9.500h11" stroke="#fa7846" strokeDasharray="2 1" /><text x="13" y="19" fontSize="9" fontWeight="700" fill="#1432dc">F</text></> },
  { label: 'Retroceso', icon: <><path d="M4 7.500h14" stroke="#fa7846" strokeDasharray="2 1" /><path d="M4 10.500h9" stroke="#1432dc" strokeWidth="1.500" /><text x="13" y="17" fontSize="9" fontWeight="700" fill="#1432dc">F</text></> },
  { label: 'Rectángulo azul', icon: <><path d="M4.500 6.500h11v8h-11z" stroke="#6ea0ff" strokeWidth="1.500" /><path d={plus(4, 15) + plus(16, 6)} stroke="#1414e6" /></> },
  { label: 'Rectángulo rojo', icon: <><path d="M4 6h12v8H4z" fill="#c8909c" stroke="#f01e1e" strokeWidth="1.500" /><path d={plus(4, 15) + plus(17, 5)} stroke="#1414e6" /></> },
  { label: 'Flecha', icon: <><path d="M5 15l8-8" stroke="#000" strokeWidth="2" /><path d="M9 5h7v7z" fill="#000" /><circle cx="5" cy="15" r="1.500" stroke="#000" /></> },
  { label: 'Texto', icon: <><rect x="3.500" y="3.500" width="13" height="13" rx="2" stroke="#6ea0f0" /><text x="10" y="14" fontSize="11" fontWeight="700" fill="#14283c" textAnchor="middle">T</text></> },
  { label: 'Globo de texto', icon: <><circle cx="10" cy="9.500" r="7" stroke="#5a8cf0" /><path d="M8 16l1 3 3-3" stroke="#5a8cf0" /><text x="10" y="13.500" fontSize="11" fontWeight="700" fill="#147828" textAnchor="middle">T</text></> },
  { label: 'Segmento', icon: <><path d="M6 14l8-8" stroke="#14283c" strokeWidth="1.300" /><circle cx="5" cy="15" r="1.800" stroke="#14283c" /><circle cx="15" cy="5" r="1.800" stroke="#14283c" /></> },
  { label: 'Semirrecta verde', icon: <Ray color="#32b43c" /> },
  { label: 'Semirrecta roja', icon: <Ray color="#ff0000" /> },
  { label: 'Regla', icon: <path d="M3 14L14 3l4 4L7 18zM6 12l2 2M8 10l1 1M10 8l2 2M12 6l1 1" stroke="#566873" /> },
  { label: 'Regresión', icon: <><path d="M2 4h16v7H2z" fill="#78b496" /><path d="M2 11h16v6H2z" fill="#b48ca0" /><path d="M2 4.500h16M2 16.500h16" stroke="#dc5a64" strokeDasharray="1 1" /><path d="M2 13l4-4 3 4 4-6 2 3 3-4" stroke="#a0b4ff" strokeWidth="1.300" /></> },
  { label: 'Elipse roja', icon: <Oval color="#f01e28" /> },
  { label: 'Elipse marrón', icon: <Oval color="#82643c" /> },
  { label: 'Elipse verde oscuro', icon: <Oval color="#14823c" /> },
  { label: 'Elipse verde', icon: <Oval color="#1ee628" /> },
  { label: 'Línea negra', icon: <Diagonal color="#14191e" width={1} /> },
  { label: 'Línea verde', icon: <Diagonal color="#32b43c" width={1.5} /> },
  { label: 'Línea roja', icon: <Diagonal color="#ff1414" width={1.8} /> },
  { label: 'Horizontal negra', icon: <HLine color="#000" width={1} /> },
  { label: 'Horizontal salmón', icon: <HLine color="#fa8c82" /> },
  { label: 'Horizontal lima', icon: <HLine color="#00ff14" /> },
  { label: 'Horizontal verde', icon: <HLine color="#00821e" /> },
  { label: 'Horizontal roja', icon: <HLine color="#ff0000" /> },
  { label: 'Horizontal celeste', icon: <HLine color="#6496ff" /> },
  { label: 'Horizontal azul', icon: <HLine color="#0000aa" /> },
  { label: 'Vertical', icon: <path d="M10.500 1v18" stroke="#000" /> },
  { label: 'Ángulo', icon: <><path d="M18 5L2 15h16" stroke="#dc5a64" strokeWidth="1.300" /><path d="M11 8q3 2 2 6" stroke="#1432dc" strokeWidth="1.500" /><circle cx="16.500" cy="8" r="1.500" stroke="#1432dc" /></> },
  { label: 'Círculo', icon: <><circle cx="9.500" cy="10.500" r="6.500" stroke="#f0825a" strokeWidth="1.300" /><path d={plus(9, 10) + plus(14, 6)} stroke="#1414e6" /></> },
  { label: 'Ondas de Elliott', icon: <><path d="M2 12l5-6 4 9 3-8 4 1" stroke="#3c64dc" strokeDasharray="1 1" /><text x="0" y="9" fontSize="7" fontWeight="700" fill="#1432dc">1</text><text x="6" y="8" fontSize="7" fontWeight="700" fill="#1432dc">3+</text><text x="13" y="7" fontSize="7" fontWeight="700" fill="#1432dc">5+</text><text x="4" y="19" fontSize="7" fontWeight="700" fill="#1432dc">+2</text><text x="12" y="17" fontSize="7" fontWeight="700" fill="#1432dc">+4</text></> },
  { label: 'Ondas abc', icon: <><path d="M3 13l7-8 4 9" stroke="#3c64dc" strokeDasharray="1 1" /><text x="0" y="17" fontSize="8" fontWeight="700" fill="#1432dc">a+</text><text x="10" y="8" fontSize="8" fontWeight="700" fill="#1432dc">+b</text><text x="11" y="19" fontSize="8" fontWeight="700" fill="#1432dc">c+</text></> },
  { label: 'Correcto', icon: <path d="M3 11l3-3 3 3 7-8 2 2-9 12z" fill="#32be3c" stroke="#1e8228" strokeWidth=".8" /> },
  { label: 'Me gusta', icon: <path d="M2 9h4v8H2zM7 9l4-3V2q3 0 3 3v3h4l-1 8-2 2H8l-1-1z" fill="#32be3c" stroke="#1e8228" strokeWidth=".8" /> },
  { label: 'Cruz', icon: <path d="M3 6l3-3 4 4 4-4 3 3-4 4 4 4-3 3-4-4-4 4-3-3 4-4z" fill="#f01e1e" stroke="#a01414" strokeWidth=".8" /> },
  { label: 'Aviso', icon: <><path d="M10 2l8 15H2z" fill="#ffb43c" stroke="#c87814" strokeLinejoin="round" /><path d="M10 7v5M10 13.500v2" stroke="#000" strokeWidth="1.800" /></> },
  { label: 'Flecha arriba', icon: <path d="M10 3l6 7h-3v7H7v-7H4z" fill="#28a032" stroke="#146e1e" strokeWidth=".8" /> },
  { label: 'Flecha abajo', icon: <path d="M7 4h6v7h3l-6 7-6-7h3z" fill="#f01e1e" /> },
];

const Svg20 = ({ children }: { children: React.ReactNode }) => (
  <svg className="shrink-0" width="20" height="20" viewBox="0 0 20 20" fill="none">
    {children}
  </svg>
);

const SideBar = () => (
  <aside className="flex w-7 shrink-0 flex-col border-r border-l border-r-[#6f8b96] border-l-[#4b6574] bg-[#9dbbc9]">
    <button type="button" aria-label="Subir" className="flex h-3 shrink-0 items-center justify-center text-[#6f8b96]">
      <ChevronUp size={9} strokeWidth={2.5} />
    </button>
    <div className="min-h-0 flex-1 basis-0 overflow-hidden px-0.5">
      {tools.map((tool, i) => (
        <button
          type="button"
          key={tool.label}
          aria-label={tool.label}
          className={`flex h-[22px] w-full items-center justify-center rounded-sm border ${i === 0 ? 'border-[#6f8b96] bg-[#8fa9b7]' : 'border-transparent'}`}
        >
          <Svg20>{tool.icon}</Svg20>
        </button>
      ))}
    </div>
    <button type="button" aria-label="Bajar" className="flex h-3 shrink-0 items-center justify-center border-y border-[#6f8b96] bg-[#b9d6e3]">
      <ChevronDown size={9} strokeWidth={3} />
    </button>
    <button type="button" aria-label="Configurar objetos" className="flex h-7 shrink-0 items-center justify-center">
      <svg width="22" height="22" viewBox="0 0 22 22" fill="none">
        <path d="M6 4h9l3 3v8H7z" fill="#f0f0f0" stroke="#788c96" />
        <circle cx="6" cy="6" r="5" fill="#149628" />
        <text x="6" y="9" fontSize="8" fontWeight="700" fill="#fff" textAnchor="middle">1</text>
        <path d="M9 17l6-6a3 3 0 0 1 4-3l-2 2 2 2 2-1a3 3 0 0 1-4 3l-5 6z" fill="#e6e6e6" stroke="#3c464b" />
      </svg>
    </button>
    <button type="button" aria-label="Más herramientas" className="flex h-[26px] shrink-0 items-center justify-center">
      <svg width="16" height="12" viewBox="0 0 16 12">
        <circle cx="2" cy="4" r="1.500" /><circle cx="7" cy="4" r="1.500" /><circle cx="12" cy="4" r="1.500" />
        <path d="M8 8h6l-3 3z" />
      </svg>
    </button>
  </aside>
);

/* ---------- panel titles ---------- */

const Swatch = ({ left, right }: { left: string; right: string }) => (
  <svg width="8" height="8" viewBox="0 0 8 8">
    <path d="M0 0h4v8H0z" fill={left} />
    <path d="M4 0h4v8H4z" fill={right} />
  </svg>
);

const PanelTitle = ({ text, left, right }: { text: string; left: string; right: string }) => (
  <button
    type="button"
    className="absolute top-0 left-0 flex h-[17px] items-center gap-1.5 border-r-2 border-b-2 border-[#6f8b96] bg-[#cddce3] px-1 font-bold whitespace-nowrap"
  >
    <Swatch left={left} right={right} />
    {text}
  </button>
);

const Panel = ({ className, title, axis, children }: { className: string; title?: React.ReactNode; axis: React.ReactNode; children: React.ReactNode }) => (
  <section className={`flex ${className}`}>
    <div className="relative min-w-0 flex-1 overflow-hidden">
      {children}
      {title}
    </div>
    {axis}
  </section>
);

const StudyTabs = () => (
  <div className="absolute top-0 left-0 flex h-4 border-r-2 border-b-2 border-[#6f8b96] bg-[#cddce3] font-bold whitespace-nowrap">
    <button type="button" aria-label="Vender" className="flex w-3.5 items-center justify-center">
      <svg width="10" height="10" viewBox="0 0 10 10"><path d="M0 0h10v10H0z" fill="#fff" /><path d="M4 1h2v4h3L5 9 1 5h3z" fill="#e63232" /></svg>
    </button>
    <button type="button" aria-label="Comprar" className="flex w-4 items-center justify-center border-r border-[#6f8b96]">
      <svg width="10" height="10" viewBox="0 0 10 10"><path d="M0 0h10v10H0z" fill="#fff" /><path d="M4 9h2V5h3L5 1 1 5h3z" fill="#1eaa28" /></svg>
    </button>
    <label className="flex items-center gap-1 border-r border-[#6f8b96] px-1">
      <input type="checkbox" className="h-2 w-2 appearance-none border border-[#6f8b96]" />
      Precio
    </label>
    <button type="button" aria-label="Lista" className="flex items-center border-r border-[#6f8b96] px-1">
      <svg width="9" height="8" viewBox="0 0 9 8"><path d="M0 1h2M3 1h6M0 4h2M3 4h6M0 7h2M3 7h6" stroke="#000" /></svg>
    </button>
    <label className="flex items-center gap-1 border-r border-[#6f8b96] px-1">
      <input type="checkbox" className="h-2 w-2 appearance-none border border-[#6f8b96]" />
      Cierre (W)
    </label>
    <button type="button" className="flex items-center gap-1.5 border-r border-[#6f8b96] px-1">
      <Swatch left="#6f8b96" right="#6f8b96" />
      Tunel Domenec v4 (t t t t t)
    </button>
    <button type="button" className="flex items-center gap-1.5 px-1">
      <svg width="8" height="8" viewBox="0 0 8 8">
        <path d="M0 0h1v8H0z" /><path d="M1 0h1v8H1z" fill="#e60000" /><path d="M3 0h2v8H3z" fill="#ff00ff" />
        <path d="M5 0h1v8H5z" fill="#00c800" /><path d="M6 0h2v8H6z" fill="#ff8c96" />
      </svg>
      Control Total Doc v.6
    </button>
  </div>
);

/* ---------- bottom bar ---------- */

const bottomLeft = [
  { label: 'Compartir', icon: <><path d="M15 4L4 10l11 6" stroke="#fff" strokeWidth="1.500" /><circle cx="4" cy="10" r="2.500" fill="#fff" /><circle cx="14" cy="4" r="2.500" fill="#fff" /><circle cx="14" cy="15" r="2.500" fill="#fff" /><path d="M13 16h6l-3 3z" fill="#000" /></> },
  { label: 'Chat', icon: <><path d="M3 3h10v8H3z" fill="#8cb4e6" stroke="#3c6eb4" /><path d="M6 7h12v8h-5l-3 3v-3H6z" fill="#4682dc" /><path d="M9 11h1M12 11h1M15 11h1" stroke="#fff" strokeWidth="1.500" /></> },
  { label: 'Notas', icon: <><path d="M5 4h10v13H5z" fill="#fff" stroke="#3c464b" /><path d="M7 7h3M7 10h6M7 13h4" stroke="#28963c" strokeWidth="1.300" /><path d="M11 5l4 5" stroke="#e63232" strokeWidth="2" /></> },
  { label: 'Libro de órdenes', icon: <><path d="M4 4h6v3H4zM4 9h6v3H4zM4 14h6v3H4z" fill="#1eb432" /><path d="M10 5h7v3h-7zM10 10h8v3h-8z" fill="#e65a5a" /><path d="M10.500 3v15" stroke="#b42828" /></> },
  { label: 'Ventanas', icon: <><rect x="2.500" y="2.500" width="11" height="9" rx="2" fill="#6ea0e6" stroke="#285ab4" /><rect x="7.500" y="8.500" width="11" height="9" rx="1" fill="#fff" stroke="#285ab4" /><path d="M9 15l3-4 2 4 3-4" stroke="#1ea032" /></> },
];

const lens = (sign: string) => (
  <>
    <circle cx="8" cy="8" r="5" fill="#f0f5fa" stroke="#505a64" strokeWidth="1.500" />
    <path d="M12 12l5 5" stroke="#000" strokeWidth="2.500" />
    <path d={sign} stroke="#1414c8" strokeWidth="2" />
  </>
);

const bottomRight = [
  { label: 'Deshacer', icon: <path d="M4 8h8q5 1 3 7M8 4L4 8l4 4" stroke="#6e9bc3" strokeWidth="2" /> },
  { label: 'Rehacer', icon: <path d="M16 8H8q-5 1-3 7M12 4l4 4-4 4" stroke="#6e9bc3" strokeWidth="2" /> },
  { label: 'Ajustes del gráfico', icon: <><path d="M3 10h4v7H3z" fill="#e65050" /><path d="M13 2h5v12h-5z" fill="#1eb432" /><path d="M5 17l6-6q-1-5 4-5l-2 3 2 2 3-2q0 5-5 4l-5 5z" fill="#e6e6e6" stroke="#28323c" /></> },
  { label: 'Zoom automático', icon: <>{lens('')}<path d="M17 2v9M15 4l2-2 2 2M15 9l2 2 2-2M1 17h9M3 15l-2 2 2 2" stroke="#1414dc" strokeWidth="1.300" /></> },
  { label: 'Alejar', icon: lens('M5 8h6') },
  { label: 'Acercar', icon: lens('M5 8h6M8 5v6') },
  { label: 'Ir al final', icon: <><path d="M2 5h16" stroke="#000" strokeWidth="2" strokeDasharray="2 2" /><path d="M10 8v6M7 12l3 4 3-4z" stroke="#2864c8" fill="#2864c8" /></> },
];

const BottomBar = () => (
  <footer className="flex h-[21px] shrink-0 items-center overflow-hidden border-t border-[#4b6574] bg-[#9dbbc9]">
    <button type="button" aria-label="Dibujar" className="flex h-full w-7 shrink-0 items-center justify-center border-r border-[#6f8b96] bg-[#8fa9b7]">
      <Svg20>
        <path d="M3 5v11M7 7v9M5 3v8" stroke="#28783c" />
        <path d="M3 16q5-2 7-8" stroke="#e61e1e" strokeWidth="1.300" />
        <path d="M9 15l7-11 3 2-7 10-4 2z" fill="#ffd23c" stroke="#785a1e" />
      </Svg20>
    </button>
    {bottomLeft.map((b) => (
      <button type="button" key={b.label} aria-label={b.label} className="flex h-5 w-[21px] shrink-0 items-center justify-center">
        <Svg20>{b.icon}</Svg20>
      </button>
    ))}
    <button type="button" aria-label="Contraer" className="flex w-[15px] shrink-0 items-center justify-center">
      <ChevronsLeft size={11} />
    </button>
    <div className="flex h-[13px] min-w-0 flex-1 border border-[#6f8b96]">
      <button type="button" aria-label="Anterior" className="flex w-3 shrink-0 items-center justify-center border-r border-[#6f8b96] bg-[#b9d6e3]">
        <ChevronLeft size={9} strokeWidth={3} />
      </button>
      <div className="flex flex-1 justify-end pr-[38px]">
        <div className="w-[9%] border-x border-[#6f8b96] bg-linear-to-b from-[#c0dce8] to-[#a3c3d2]" />
      </div>
      <button type="button" aria-label="Siguiente" className="flex w-3 shrink-0 items-center justify-center border-l border-[#6f8b96] bg-[#b9d6e3]">
        <ChevronRight size={9} strokeWidth={3} />
      </button>
    </div>
    <div className="flex w-[150px] shrink-0 gap-0.5 overflow-hidden pl-1">
      {bottomRight.map((b) => (
        <button type="button" key={b.label} aria-label={b.label} className="flex h-5 w-5 shrink-0 items-center justify-center">
          <Svg20>{b.icon}</Svg20>
        </button>
      ))}
    </div>
  </footer>
);

const DateAxis = () => (
  <svg className="block h-full w-full" viewBox="28 996 1847 14" preserveAspectRatio="xMinYMin slice">
    <g stroke="#6f8b96">
      {gridX.map((x) => (
        <line key={x} x1={x + 0.5} x2={x + 0.5} y1="996" y2="999" />
      ))}
    </g>
    {dateLabels.map(([x, text]) => (
      <text key={x} x={x} y="1008" fontSize="9" fontWeight="700" textAnchor="middle">
        {text}
      </text>
    ))}
  </svg>
);

const App = () => {
  return (
    <div className="flex h-screen flex-col overflow-hidden bg-white font-['Liberation_Sans',Arial,sans-serif] text-[9px] text-black">
      <TopBar />
      <div className="flex min-h-0 flex-1">
        <SideBar />
        <main className="flex min-w-0 flex-1 flex-col">
          <Panel className="min-h-0 flex-1" title={<StudyTabs />} axis={<Axis top={23} height={649} tags={priceTags} />}>
            <PriceChart />
          </Panel>
          <Panel
            className="h-[90px] border-t border-[#6f8b96]"
            title={<PanelTitle text="Sistema de trenes Doc v4 (f f)" left="#6f8b96" right="#000" />}
            axis={
              <Axis
                top={673}
                height={89}
                tags={[
                  { y: 680, text: '100', boxed: true },
                  { y: 695, text: '80', boxed: true },
                  { y: 713, text: '50', color: '#0000a0', boxed: true },
                  { y: 732, text: '33,500', boxed: true },
                  { y: 721, text: '47,077', boxed: true },
                  { y: 742, text: '20,276', boxed: true },
                  { y: 742, text: '20', boxed: true },
                  { y: 755, text: '0', boxed: true },
                ]}
              />
            }
          >
            <TrainsChart />
          </Panel>
          <Panel
            className="h-[83px] border-t border-[#6f8b96]"
            title={<PanelTitle text="Willy Doc (t)" left="#6f8b96" right="#6f8b96" />}
            axis={
              <Axis
                top={763}
                height={82}
                tags={[
                  { y: 770, text: '0', boxed: true },
                  { y: 787, text: '-25', color: '#0000a0', boxed: true },
                  { y: 802, text: '-50', color: '#0000a0', boxed: true },
                  { y: 812, text: '-58,642', color: '#0000c8', boxed: true },
                  { y: 825, text: '-75', color: '#d20000', boxed: true },
                  { y: 838, text: '-100', boxed: true },
                ]}
              />
            }
          >
            <WillyChart />
          </Panel>
          <Panel
            className="h-[65px] border-t border-[#6f8b96]"
            title={<PanelTitle text="Awesome Evolution Doc" left="#6f8b96" right="#6f8b96" />}
            axis={
              <Axis
                top={846}
                height={64}
                tags={[
                  { y: 850, text: '400' },
                  { y: 867, text: '200' },
                  { y: 878, text: '0', color: '#0000c8', boxed: true },
                  { y: 890, text: '-81,517', color: '#00c83c', boxed: true },
                  { y: 897, text: '-81,517', color: '#5adc5a', boxed: true },
                ]}
              />
            }
          >
            <AwesomeChart />
          </Panel>
          <Panel
            className="h-[85px] border-t border-[#6f8b96]"
            title={<PanelTitle text="Barra Fuerza Fondo Mercado v4 (f)" left="#000" right="#6f8b96" />}
            axis={
              <Axis
                top={911}
                height={84}
                tags={[
                  { y: 929, text: '1' },
                  { y: 949, text: '0,8' },
                  { y: 989, text: '0,4' },
                  { y: 969, text: '0,5942', color: '#ff0000', boxed: true },
                  { y: 981, text: '0,5000', boxed: true },
                ]}
              />
            }
          >
            <ForceChart />
          </Panel>
          <Panel className="h-[15px] border-t border-[#6f8b96]" axis={<div className="w-10 shrink-0" />}>
            <DateAxis />
          </Panel>
        </main>
      </div>
      <BottomBar />
    </div>
  );
};

export default App;
